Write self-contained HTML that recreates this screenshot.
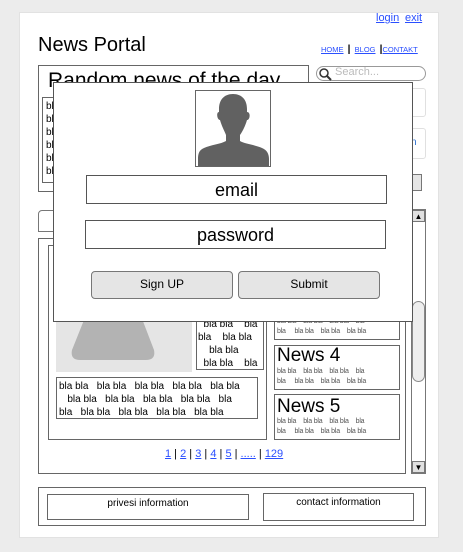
<!DOCTYPE html>
<html><head><meta charset="utf-8"><style>
*{margin:0;padding:0;box-sizing:border-box}
body{width:463px;height:552px;background:#ececec;position:relative;overflow:hidden;font-family:"Liberation Sans",Arial,sans-serif;color:#000}
.a{position:absolute}
.b{border:1.5px solid #666;background:#fff}
a,.l{color:#2a4fff;text-decoration:underline}
.sm{font-size:7px;color:#555;line-height:10px;letter-spacing:-.2px}
.t{font-size:10px;line-height:13px}
</style></head><body>
<div class="a" style="left:19px;top:12px;width:420px;height:526px;background:#fff;border:1px solid #e2e2e2"></div>
<div class="a l" style="left:376px;top:12px;font-size:11px">login</div>
<div class="a l" style="left:405px;top:12px;font-size:11px">exit</div>
<div class="a" style="left:38px;top:34px;font-size:20px">News Portal</div>
<div class="a" style="left:321px;top:44px;font-size:7.5px;white-space:nowrap"><span class="l">HOME</span>&nbsp; <b style="font-size:10px;color:#000">|</b>&nbsp; <span class="l">BLOG</span>&nbsp; <b style="font-size:10px;color:#000">|</b><span class="l">CONTAKT</span></div>
<div class="a b" style="left:38px;top:65px;width:271px;height:127px"></div>
<div class="a" style="left:48px;top:69px;font-size:21px">Random news of the day</div>
<div class="a b" style="left:42px;top:97px;width:40px;height:86px;border-width:1px"></div>
<div class="a t" style="left:46px;top:100px;line-height:13px">bl<br>bl<br>bl<br>bl<br>bl<br>bl</div>
<div class="a" style="left:316px;top:66px;width:110px;height:15px;border:1px solid #999;border-radius:8px"></div>
<svg class="a" style="left:318px;top:67px" width="14" height="14"><circle cx="6" cy="6" r="4" fill="none" stroke="#333" stroke-width="1.5"/><path d="M9 9 L13 13" stroke="#333" stroke-width="2"/></svg>
<div class="a" style="left:335px;top:66px;font-size:11px;color:#bbb">Search...</div>
<div class="a" style="left:316px;top:88px;width:110px;height:29px;border:1px solid #e0e0e0;border-radius:3px"></div>
<div class="a" style="left:316px;top:128px;width:110px;height:31px;border:1px solid #e0e0e0;border-radius:3px"></div>
<div class="a" style="left:411px;top:137px;font-size:10px;color:#2a6fd0">n</div>
<div class="a" style="left:316px;top:174px;width:106px;height:17px;border:1px solid #777;background:#e5e5e5"></div>
<div class="a" style="left:38px;top:210px;width:60px;height:22px;border:1px solid #777;border-radius:4px 4px 0 0"></div>
<div class="a b" style="left:38px;top:238px;width:368px;height:236px;border-width:1.5px"></div>
<div class="a" style="left:411px;top:209px;width:15px;height:265px;border:1px solid #777;background:#fff"></div>
<div class="a" style="left:412px;top:210px;width:13px;height:12px;border:1px solid #777;background:#e0e0e0;font-size:8px;text-align:center;line-height:11px">▲</div>
<div class="a" style="left:412px;top:461px;width:13px;height:12px;border:1px solid #777;background:#e0e0e0;font-size:8px;text-align:center;line-height:11px">▼</div>
<div class="a" style="left:412px;top:301px;width:13px;height:81px;border:1px solid #888;border-radius:7px;background:#eee"></div>
<div class="a b" style="left:48px;top:245px;width:219px;height:195px;border-width:1px"></div>
<div class="a" style="left:56px;top:250px;width:136px;height:122px;background:#e5e5e5"></div>
<svg class="a" style="left:56px;top:250px" width="136" height="122"><path d="M40 40 L75 40 L98 100 Q100 110 90 110 L24 110 Q14 110 16 100 Z" fill="#b3b3b3"/></svg>
<div class="a b" style="left:196px;top:250px;width:68px;height:120px;border-width:1px"></div>
<div class="a t" style="left:198px;top:318px;width:66px;white-space:pre">  bla bla    bla
bla    bla bla
    bla bla
  bla bla    bla</div>
<div class="a b" style="left:56px;top:377px;width:202px;height:42px;border-width:1px"></div>
<div class="a t" style="left:59px;top:380px;white-space:pre">bla bla   bla bla   bla bla   bla bla   bla bla
   bla bla   bla bla   bla bla   bla bla   bla
bla   bla bla   bla bla   bla bla   bla bla</div>
<div class="a b" style="left:274px;top:300px;width:126px;height:40px;border-width:1px"></div>
<div class="a sm" style="left:277px;top:317px;white-space:pre">bla bla    bla bla    bla bla    bla
bla     bla bla    bla bla    bla bla</div>
<div class="a b" style="left:274px;top:345px;width:126px;height:45px;border-width:1px"></div>
<div class="a" style="left:277px;top:345px;font-size:19px">News 4</div>
<div class="a sm" style="left:277px;top:367px;white-space:pre">bla bla    bla bla    bla bla    bla
bla     bla bla    bla bla    bla bla</div>
<div class="a b" style="left:274px;top:394px;width:126px;height:46px;border-width:1px"></div>
<div class="a" style="left:277px;top:396px;font-size:19px">News 5</div>
<div class="a sm" style="left:277px;top:417px;white-space:pre">bla bla    bla bla    bla bla    bla
bla     bla bla    bla bla    bla bla</div>
<div class="a" style="left:165px;top:448px;font-size:11px;white-space:nowrap"><span class="l">1</span> | <span class="l">2</span> | <span class="l">3</span> | <span class="l">4</span> | <span class="l">5</span> | <span class="l">.....</span> | <span class="l">129</span></div>
<div class="a b" style="left:38px;top:487px;width:388px;height:39px"></div>
<div class="a b" style="left:47px;top:494px;width:202px;height:26px"></div>
<div class="a" style="left:47px;top:498px;width:202px;text-align:center;font-size:10px">privesi information</div>
<div class="a b" style="left:263px;top:493px;width:151px;height:28px"></div>
<div class="a" style="left:263px;top:497px;width:151px;text-align:center;font-size:10px">contact information</div>

<div class="a" style="left:53px;top:82px;width:360px;height:240px;background:#fff;border:1.5px solid #555"></div>
<div class="a" style="left:195px;top:90px;width:76px;height:77px;border:1.5px solid #666;background:#fff;overflow:hidden">
<svg width="76" height="77"><path d="M37 3 C28 3 23 9 23 18 L23 21 C20 21 21 29 24 29 C26 36 29 41 30 44 L30 50 C25 53 14 54 8 57 C3 59 2 63 2 68 L2 77 L73 77 L73 68 C73 63 71 59 66 57 C60 54 49 53 44 50 L44 44 C46 41 49 36 51 29 C54 29 55 21 51 21 L51 18 C51 9 46 3 37 3 Z" fill="#616161"/></svg></div>
<div class="a" style="left:86px;top:175px;width:301px;height:29px;border:1.5px solid #555"></div>
<div class="a" style="left:86px;top:180px;width:301px;text-align:center;font-size:18px">email</div>
<div class="a" style="left:85px;top:220px;width:301px;height:29px;border:1.5px solid #555"></div>
<div class="a" style="left:85px;top:225px;width:301px;text-align:center;font-size:18px">password</div>
<div class="a" style="left:91px;top:271px;width:142px;height:28px;border:1.5px solid #777;border-radius:4px;background:#e5e5e5;text-align:center;line-height:25px;font-size:12px">Sign UP</div>
<div class="a" style="left:238px;top:271px;width:142px;height:28px;border:1.5px solid #777;border-radius:4px;background:#e5e5e5;text-align:center;line-height:25px;font-size:12px">Submit</div>
</body></html>
